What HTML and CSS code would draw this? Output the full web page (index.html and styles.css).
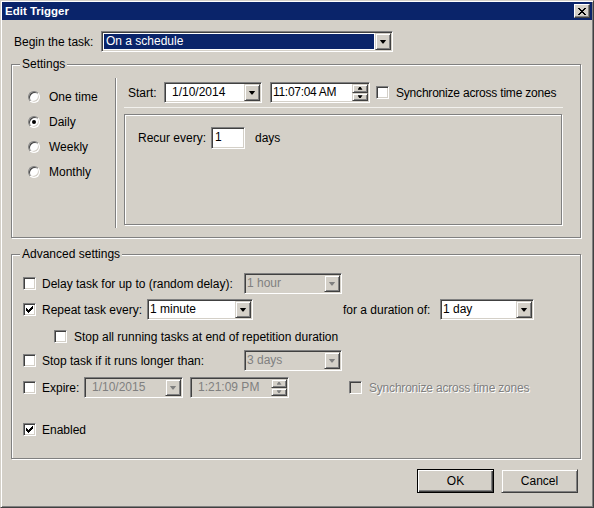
FILE: index.html
```html
<!DOCTYPE html>
<html lang="en">
<head>
  <meta charset="UTF-8">
  <title>Edit Trigger</title>
  <link rel="stylesheet" href="styles.css">
</head>
<body>
  <div class="window">
    <div class="titlebar">
      <span class="title">Edit Trigger</span>
      <button class="close-btn">
        <svg width="8" height="7" viewBox="0 0 8 7"><path d="M0 0h2v1H0zM6 0h2v1H6zM1 1h2v1H1zM5 1h2v1H5zM2 2h4v1H2zM3 3h2v1H3zM2 4h4v1H2zM1 5h2v1H1zM5 5h2v1H5zM0 6h2v1H0zM6 6h2v1H6z" fill="#000"/></svg>
      </button>
    </div>

    <div class="dialog">
      <div class="begin-row">
        <span class="begin-label">Begin the task:</span>
        <div class="combo combo-begin">
          <span class="combo-text selected">On a schedule</span>
          <span class="drop-btn"><i class="arrow"></i></span>
        </div>
      </div>

      <!-- Settings -->
      <div class="group group-settings">
        <span class="group-title">Settings</span>
        <div class="radio-col">
          <div class="radio-row"><span class="radio"></span>One time</div>
          <div class="radio-row"><span class="radio on"></span>Daily</div>
          <div class="radio-row"><span class="radio"></span>Weekly</div>
          <div class="radio-row"><span class="radio"></span>Monthly</div>
        </div>
        <div class="vsep"></div>
        <div class="schedule">
          <div class="start-row">
            <span class="start-label">Start:</span>
            <div class="combo date">
              <span class="combo-text date-text">1/10/2014</span>
              <span class="drop-btn"><i class="arrow"></i></span>
            </div>
            <div class="combo time">
              <span class="combo-text time-text">11:07:04 AM</span>
              <span class="spin">
                <span class="spin-btn"><i class="up"></i></span>
                <span class="spin-btn"><i class="down"></i></span>
              </span>
            </div>
            <span class="cb sync-cb"></span>
            <span class="cb-label">Synchronize across time zones</span>
          </div>
          <div class="hline"></div>
          <div class="inner-box">
            <div class="recur-row">
              <span class="recur-label">Recur every:</span>
              <span class="edit">1</span>
              <span class="days">days</span>
            </div>
          </div>
        </div>
      </div>

      <!-- Advanced settings -->
      <div class="group group-advanced">
        <span class="group-title">Advanced settings</span>

        <div class="adv-row row-delay">
          <span class="cb"></span>
          <span class="cb-label w-long">Delay task for up to (random delay):</span>
          <div class="combo disabled w98">
            <span class="combo-text">1 hour</span>
            <span class="drop-btn"><i class="arrow"></i></span>
          </div>
        </div>

        <div class="adv-row row-repeat">
          <span class="cb"><svg width="7" height="7" viewBox="0 0 7 7"><path d="M0 2H1V3H2V4H3V3H4V2H5V1H6V0H7V3H6V4H5V5H4V6H3V7H2V6H1V5H0Z" fill="#000"/></svg></span>
          <span class="cb-label w-repeat">Repeat task every:</span>
          <div class="combo w-minute">
            <span class="combo-text">1 minute</span>
            <span class="drop-btn"><i class="arrow"></i></span>
          </div>
          <span class="dur-label">for a duration of:</span>
          <div class="combo w-day">
            <span class="combo-text">1 day</span>
            <span class="drop-btn"><i class="arrow"></i></span>
          </div>
        </div>

        <div class="adv-row row-stopall">
          <span class="cb"></span>
          <span class="cb-label">Stop all running tasks at end of repetition duration</span>
        </div>

        <div class="adv-row row-stop">
          <span class="cb"></span>
          <span class="cb-label w-long">Stop task if it runs longer than:</span>
          <div class="combo disabled w98">
            <span class="combo-text">3 days</span>
            <span class="drop-btn"><i class="arrow"></i></span>
          </div>
        </div>

        <div class="adv-row row-expire">
          <span class="cb"></span>
          <span class="cb-label w-expire">Expire:</span>
          <div class="combo disabled w99">
            <span class="combo-text date-text">1/10/2015</span>
            <span class="drop-btn"><i class="arrow"></i></span>
          </div>
          <div class="combo disabled w99 expire-time">
            <span class="combo-text date-text">1:21:09 PM</span>
            <span class="spin">
              <span class="spin-btn"><i class="up"></i></span>
              <span class="spin-btn"><i class="down"></i></span>
            </span>
          </div>
          <span class="cb disabled expire-sync"></span>
          <span class="cb-label gray">Synchronize across time zones</span>
        </div>

        <div class="adv-row row-enabled">
          <span class="cb"><svg width="7" height="7" viewBox="0 0 7 7"><path d="M0 2H1V3H2V4H3V3H4V2H5V1H6V0H7V3H6V4H5V5H4V6H3V7H2V6H1V5H0Z" fill="#000"/></svg></span>
          <span class="cb-label">Enabled</span>
        </div>
      </div>

      <div class="buttons">
        <button class="btn default">OK</button>
        <button class="btn">Cancel</button>
      </div>
    </div>
  </div>
</body>
</html>
```

FILE: styles.css
```css
/* Classic dialog look */
* {
  box-sizing: border-box;
}
body {
  margin: 0;
  font-family: "Liberation Sans", Arial, sans-serif;
  font-size: 12px;
  color: #000;
  background: #d4d0c8;
}
.window {
  width: 594px;
  height: 508px;
  padding: 1px;
  background: #d4d0c8;
  border: 1px solid;
  border-color: #d4d0c8 #404040 #404040 #d4d0c8;
  box-shadow: inset 1px 1px 0 #fff, inset -1px -1px 0 #808080;
}
.titlebar {
  height: 18px;
  display: flex;
  align-items: center;
  justify-content: space-between;
  padding: 0 2px 0 3px;
  background: #0a246a;
}
.title {
  color: #fff;
  font-weight: bold;
  font-size: 11.5px;
}
.close-btn {
  width: 16px;
  height: 14px;
  padding: 0;
  display: flex;
  align-items: center;
  justify-content: center;
  background: #d4d0c8;
  border: 1px solid;
  border-color: #fff #404040 #404040 #fff;
  box-shadow: inset -1px -1px 0 #808080;
}

/* 3D pieces */
.combo,
.edit,
.cb {
  background: #fff;
  border: 1px solid;
  border-color: #808080 #fff #fff #808080;
  box-shadow: inset 1px 1px 0 #404040, inset -1px -1px 0 #d4d0c8;
}
.combo {
  display: flex;
  height: 21px;
  padding: 1px;
  flex-shrink: 0;
}
.combo-text {
  flex: 1;
  padding-left: 1px;
  line-height: 17px;
  white-space: nowrap;
  overflow: hidden;
}
.combo-text.selected {
  margin: 1px;
  padding-left: 2px;
  line-height: 15px;
  background: #0a246a;
  color: #fff;
}
.drop-btn,
.spin-btn,
.btn {
  background: #d4d0c8;
  border: 1px solid;
  border-color: #d4d0c8 #404040 #404040 #d4d0c8;
  box-shadow: inset 1px 1px 0 #fff, inset -1px -1px 0 #808080;
}
.drop-btn {
  width: 16px;
  height: 17px;
  display: flex;
  align-items: center;
  justify-content: center;
}
.arrow {
  display: block;
  width: 7px;
  height: 4px;
  background: #000;
  clip-path: polygon(0 0, 7px 0, 4px 4px, 3px 4px);
}
.spin {
  width: 16px;
  display: flex;
  flex-direction: column;
}
.spin-btn {
  flex: 1;
  display: flex;
  align-items: center;
  justify-content: center;
}
.spin-btn i {
  display: block;
  width: 5px;
  height: 3px;
  background: #000;
}
.up {
  clip-path: polygon(2px 0, 3px 0, 5px 3px, 0 3px);
}
.down {
  clip-path: polygon(0 0, 5px 0, 3px 3px, 2px 3px);
}
.combo.disabled {
  background: #d4d0c8;
  color: #808080;
}
.combo.disabled .arrow,
.combo.disabled .spin-btn i {
  background: #808080;
}

.cb {
  width: 13px;
  height: 13px;
  flex-shrink: 0;
  display: flex;
  align-items: center;
  justify-content: center;
}
.cb.disabled {
  background: #d4d0c8;
}
.cb-label {
  margin-left: 6px;
  white-space: nowrap;
}
.cb-label.gray {
  margin-left: 7px;
  color: #808080;
  text-shadow: 1px 1px 0 #fff;
  letter-spacing: -0.2px;
}

.radio {
  width: 12px;
  height: 12px;
  border-radius: 50%;
  background: #fff;
  border: 1px solid;
  border-color: #808080 #fff #fff #808080;
  box-shadow: inset 1px 1px 0 #404040, inset -1px -1px 0 #d4d0c8;
  display: flex;
  align-items: center;
  justify-content: center;
}
.radio.on::after {
  content: "";
  width: 4px;
  height: 4px;
  border-radius: 50%;
  background: #000;
}

/* Layout */
.dialog {
  padding-top: 11px;
}
.begin-row {
  display: flex;
  align-items: center;
  height: 21px;
  padding-left: 12px;
}
.begin-label {
  width: 87px;
}
.combo-begin {
  width: 292px;
}

.group {
  position: relative;
  margin-left: 9px;
  width: 570px;
  border: 1px solid #808080;
  box-shadow: 1px 1px 0 #fff, inset 1px 1px 0 #fff;
}
.group-title {
  position: absolute;
  top: -8px;
  left: 8px;
  padding: 0 2px;
  line-height: 14px;
  background: #d4d0c8;
}
.group-settings {
  margin-top: 12px;
  height: 174px;
  display: flex;
}
.radio-col {
  width: 103px;
  padding: 19px 0 0 16px;
}
.radio-row {
  display: flex;
  align-items: center;
  gap: 9px;
  height: 25px;
}
.vsep {
  width: 2px;
  height: 150px;
  margin-top: 13px;
  border-left: 1px solid #808080;
  border-right: 1px solid #fff;
}
.schedule {
  flex: 1;
}
.start-row {
  display: flex;
  align-items: center;
  height: 21px;
  margin-top: 17px;
  padding-left: 11px;
}
.start-label {
  width: 36px;
}
.date {
  width: 98px;
}
.date-text {
  padding-left: 6px;
}
.time {
  width: 100px;
  margin-left: 8px;
}
.time-text {
  padding-left: 1px;
  letter-spacing: -0.3px;
}
.sync-cb {
  margin-left: 6px;
}
.start-row .cb-label {
  margin-left: 7px;
  letter-spacing: -0.2px;
}
.hline {
  width: 439px;
  height: 1px;
  margin: 4px 0 0 7px;
  background: #f2f1ed;
}
.inner-box {
  width: 438px;
  height: 111px;
  margin: 6px 0 0 7px;
  padding: 12px 0 0 13px;
  border: 1px solid #808080;
  box-shadow: 1px 1px 0 #fff, inset 1px 1px 0 #fff;
}
.recur-row {
  display: flex;
  align-items: center;
  height: 22px;
}
.recur-label {
  width: 73px;
}
.edit {
  width: 34px;
  height: 22px;
  padding-left: 3px;
  line-height: 18px;
}
.days {
  margin-left: 10px;
}

.group-advanced {
  margin-top: 16px;
  height: 205px;
  padding: 18px 0 0 11px;
}
.adv-row {
  display: flex;
  align-items: center;
  height: 21px;
}
.w-long {
  width: 202px;
}
.w98 {
  width: 98px;
}
.w99 {
  width: 99px;
}
.row-repeat {
  margin-top: 5px;
}
.w-repeat {
  width: 105px;
}
.w-minute {
  width: 106px;
}
.dur-label {
  width: 97px;
  margin-left: 90px;
}
.w-day {
  width: 94px;
}
.row-stopall {
  margin-top: 6px;
  padding-left: 31px;
}
.row-stopall .cb-label {
  margin-left: 7px;
}
.row-stop {
  margin-top: 3px;
}
.row-expire {
  margin-top: 6px;
}
.w-expire {
  width: 42px;
}
.expire-time {
  margin-left: 7px;
}
.expire-sync {
  margin-left: 60px;
}
.row-enabled {
  margin-top: 21px;
}

.buttons {
  display: flex;
  justify-content: flex-end;
  gap: 7px;
  margin-top: 10px;
  padding-right: 14px;
}
.btn {
  width: 77px;
  height: 24px;
  padding: 0;
  font-family: inherit;
  font-size: 12px;
  color: #000;
}
.btn.default {
  border: 1px solid #000;
  box-shadow: inset 1px 1px 0 #fff, inset -1px -1px 0 #404040, inset -2px -2px 0 #808080;
}
```
